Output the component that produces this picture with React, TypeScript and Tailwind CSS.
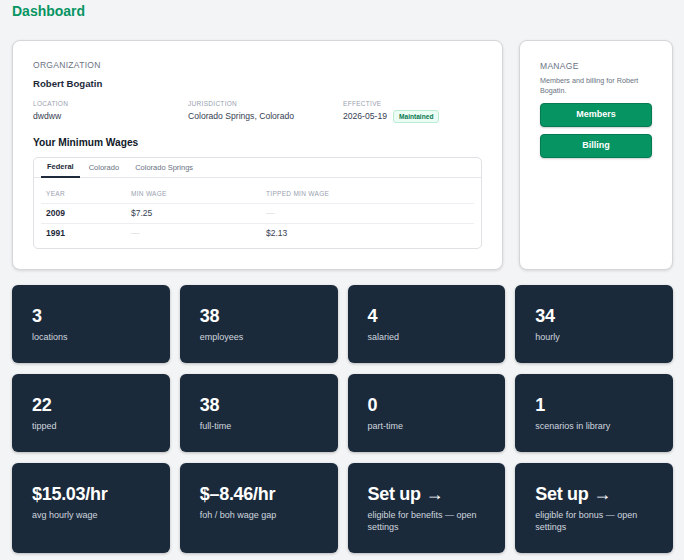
import React from "react";

const stats = [
  { value: "3", label: "locations" },
  { value: "38", label: "employees" },
  { value: "4", label: "salaried" },
  { value: "34", label: "hourly" },
  { value: "22", label: "tipped" },
  { value: "38", label: "full-time" },
  { value: "0", label: "part-time" },
  { value: "1", label: "scenarios in library" },
  { value: "$15.03/hr", label: "avg hourly wage" },
  { value: "$\u20138.46/hr", label: "foh / boh wage gap" },
  { value: "Set up \u2192", label: "eligible for benefits \u2014 open settings" },
  { value: "Set up \u2192", label: "eligible for bonus \u2014 open settings" },
];

const wages = [
  { year: "2009", min: "$7.25", tipped: "\u2014" },
  { year: "1991", min: "\u2014", tipped: "$2.13" },
];

function Field({ label, children }: { label: string; children: React.ReactNode }) {
  return (
    <div>
      <div className="text-[6.5px] leading-[9px] tracking-[0.3px] uppercase text-gray-400">{label}</div>
      <div className="mt-[2px] h-[13px] flex items-center gap-[6px] text-[8.6px] text-gray-700">{children}</div>
    </div>
  );
}

export default function App() {
  return (
    <div
      className="min-h-[560px] bg-[#f3f4f6] pl-3 pr-[11px] pb-6"
      style={{ fontFamily: '"Liberation Sans", Arial, sans-serif' }}
    >
      <h1 className="h-[22px] flex items-center text-[14px] font-bold text-[#079463]">Dashboard</h1>

      <div className="mt-[18px] flex gap-4">
        {/* Organization card */}
        <div className="flex-1 rounded-lg border border-[#d4d6da] bg-white px-5 pt-[19px] pb-5 shadow-[0_1px_3px_rgba(0,0,0,0.12)]">
          <div className="text-[8.5px] leading-[11px] tracking-[0.3px] uppercase text-gray-500">Organization</div>
          <div className="mt-[6px] text-[9.6px] leading-[13px] font-semibold text-gray-800">Robert Bogatin</div>

          <div className="mt-[9px] grid grid-cols-3 gap-4">
            <Field label="Location">dwdww</Field>
            <Field label="Jurisdiction">Colorado Springs, Colorado</Field>
            <Field label="Effective">
              <span>2026-05-19</span>
              <span className="h-[13px] px-[5px] flex items-center rounded-[3px] border border-[#b7ecd3] bg-[#ecfdf5] text-[6.6px] font-semibold text-[#07784f]">
                Maintained
              </span>
            </Field>
          </div>

          <h2 className="mt-[13px] text-[10.2px] leading-[14px] font-bold text-gray-900">Your Minimum Wages</h2>

          <div className="mt-[7px] rounded-[5px] border border-[#dfe1e5]">
            <div className="flex gap-[2px] border-b border-[#e5e7eb] px-[7px]">
              <div className="h-[20px] -mb-px flex items-center border-b-2 border-gray-800 px-[6px] text-[7.5px] font-semibold text-gray-800">
                Federal
              </div>
              <div className="h-[20px] -mb-px flex items-center px-[7px] text-[7.5px] text-gray-500">Colorado</div>
              <div className="h-[20px] -mb-px flex items-center px-[7px] text-[7.5px] text-gray-500">Colorado Springs</div>
            </div>
            <div className="px-[7px] pt-[6px] pb-[5px]">
              <div className="grid grid-cols-[85px_135px_1fr] h-[19px] items-center text-[6.5px] tracking-[0.3px] uppercase text-gray-400">
                <div className="px-[5px]">Year</div>
                <div className="px-[5px]">Min Wage</div>
                <div className="px-[5px]">Tipped Min Wage</div>
              </div>
              {wages.map((w) => (
                <div
                  key={w.year}
                  className="grid grid-cols-[85px_135px_1fr] h-[20px] items-center border-t border-[#eceef1] text-[8.5px]"
                >
                  <div className="px-[5px] font-semibold text-gray-800">{w.year}</div>
                  <div className={"px-[5px] " + (w.min === "\u2014" ? "text-gray-300" : "text-gray-700")}>{w.min}</div>
                  <div className={"px-[5px] " + (w.tipped === "\u2014" ? "text-gray-300" : "text-gray-700")}>{w.tipped}</div>
                </div>
              ))}
            </div>
          </div>
        </div>

        {/* Manage card */}
        <div className="w-[154px] rounded-lg border border-[#d4d6da] bg-white px-5 pt-[19px] pb-5 shadow-[0_1px_3px_rgba(0,0,0,0.12)]">
          <div className="text-[8.5px] leading-[12px] tracking-[0.3px] uppercase text-gray-500">Manage</div>
          <p className="mt-[4px] text-[7.2px] leading-[10px] text-gray-500">Members and billing for Robert Bogatin.</p>
          <div className="mt-[7px] flex flex-col gap-[7px]">
            <button className="h-[24px] rounded-[4px] border border-[#067a52] bg-[#079463] text-[9px] font-bold text-white shadow-[0_1px_2px_rgba(0,0,0,0.2)]">
              Members
            </button>
            <button className="h-[24px] rounded-[4px] border border-[#067a52] bg-[#079463] text-[9px] font-bold text-white shadow-[0_1px_2px_rgba(0,0,0,0.2)]">
              Billing
            </button>
          </div>
        </div>
      </div>

      {/* Stat tiles */}
      <div className="mt-[15px] grid grid-cols-4 gap-x-[10px] gap-y-[11px]">
        {stats.map((s, i) => (
          <div
            key={i}
            className="rounded-md bg-[#1b2a3b] p-5 shadow-[0_1px_3px_rgba(0,0,0,0.25)]"
          >
            <div className="text-[18px] leading-[22px] font-bold tracking-[-0.3px] text-white">{s.value}</div>
            <div className="mt-1 text-[9px] leading-[12px] text-[#cfd6df]">{s.label}</div>
          </div>
        ))}
      </div>
    </div>
  );
}
